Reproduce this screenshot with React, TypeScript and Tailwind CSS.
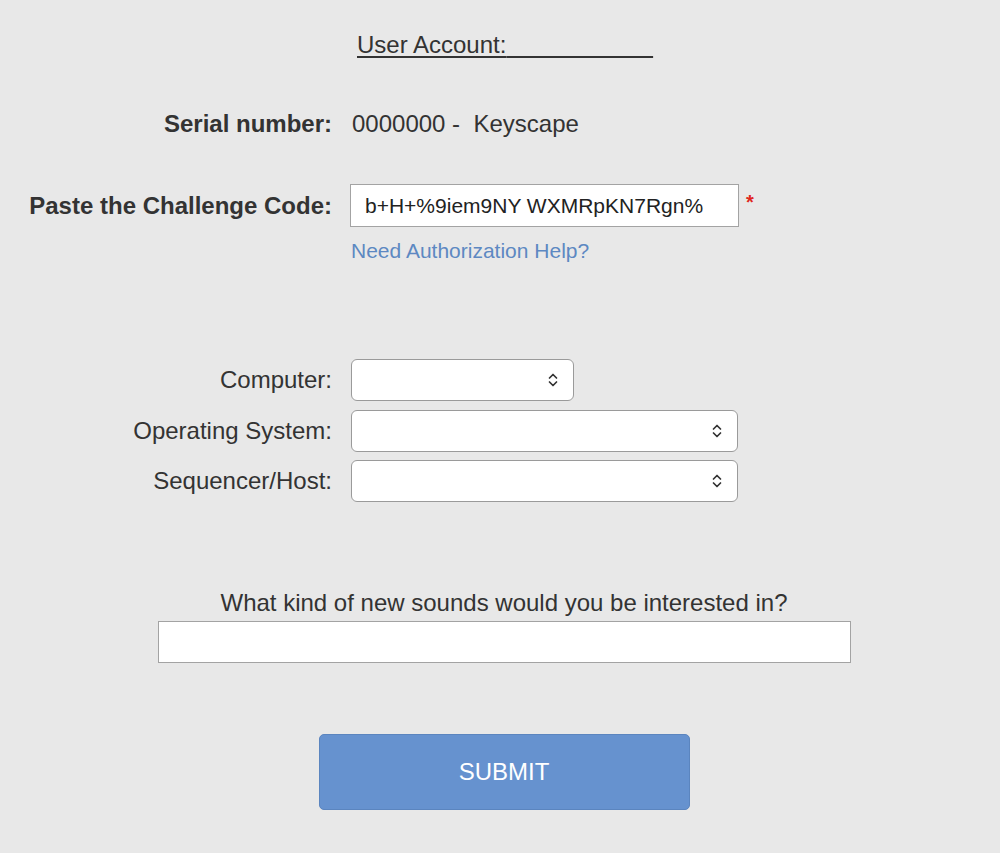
import React from "react"

function Chevrons() {
  return (
    <svg width="10" height="16" viewBox="0 0 10 16" fill="none" stroke="#333" strokeWidth="1.7" strokeLinecap="round" strokeLinejoin="round">
      <path d="M1.5 6 L5 2.5 L8.5 6" />
      <path d="M1.5 10 L5 13.5 L8.5 10" />
    </svg>
  )
}

function SelectBox({ width }: { width: string }) {
  return (
    <div className={`${width} h-[42px] bg-white border border-[#9a9a9a] rounded-[6px] flex items-center justify-end pr-[15px]`}>
      <Chevrons />
    </div>
  )
}

function Label({ children, bold }: { children: React.ReactNode; bold?: boolean }) {
  return (
    <div className={`w-[332px] shrink-0 text-right text-[24px] leading-[28px] text-[#333] ${bold ? "font-bold" : ""}`}>
      {children}
    </div>
  )
}

export default function App() {
  const blanks = "\u00a0".repeat(22)
  return (
    <div className="min-h-[853px] w-full bg-[#e8e8e8] font-['Liberation_Sans',Arial,sans-serif] text-[#333] flex flex-col pb-[44px]">
      <div className="pt-[31px] pl-[357px] text-[24px] leading-[28px]">
        <span className="underline decoration-[1.5px] underline-offset-[3px]">User Account:{blanks}</span>
      </div>

      <div className="mt-[51px] flex items-center">
        <Label bold>Serial number:</Label>
        <div className="ml-[20px] text-[24px] leading-[28px]">0000000 -{"\u00a0\u00a0"}Keyscape</div>
      </div>

      <div className="mt-[46px] flex items-center">
        <Label bold>Paste the Challenge Code:</Label>
        <div className="ml-[18px] w-[389px] h-[43px] bg-white border-[1.5px] border-[#a3a3a3] flex items-center pl-[14px] text-[21px] text-[#222]">
          b+H+%9iem9NY WXMRpKN7Rgn%
        </div>
        <span className="self-start mt-[8px] ml-[7px] text-[#e0271f] text-[20px] font-bold leading-[20px]">*</span>
      </div>

      <div className="mt-[12px] pl-[351px]">
        <a className="text-[21px] leading-[24px] text-[#5d88c2]">Need Authorization Help?</a>
      </div>

      <div className="mt-[94px] flex items-center">
        <Label>Computer:</Label>
        <div className="ml-[19px]">
          <SelectBox width="w-[223px]" />
        </div>
      </div>

      <div className="mt-[9px] flex items-center">
        <Label>Operating System:</Label>
        <div className="ml-[19px]">
          <SelectBox width="w-[387px]" />
        </div>
      </div>

      <div className="mt-[8px] flex items-center">
        <Label>Sequencer/Host:</Label>
        <div className="ml-[19px]">
          <SelectBox width="w-[387px]" />
        </div>
      </div>

      <div className="mt-[87px] pl-[8px] flex flex-col items-center">
        <div className="text-[24px] leading-[28px]">What kind of new sounds would you be interested in?</div>
        <div className="mt-[4px] w-[693px] h-[42px] bg-white border-[1.5px] border-[#a3a3a3]" />
        <button className="mt-[71px] w-[371px] h-[76px] bg-[#6692cf] border border-[#5b85bf] rounded-[5px] text-white text-[24px]">
          SUBMIT
        </button>
      </div>
    </div>
  )
}
